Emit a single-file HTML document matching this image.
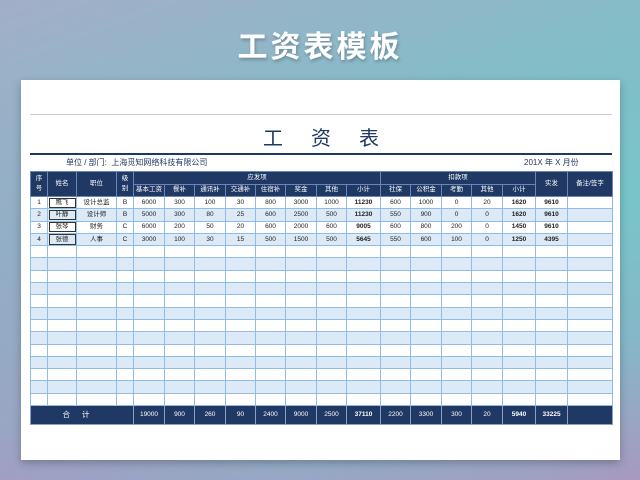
<!DOCTYPE html>
<html><head><meta charset="utf-8"><style>
*{margin:0;padding:0;box-sizing:border-box}
body{width:640px;height:480px;overflow:hidden;position:relative;font-family:"Liberation Sans","Noto Sans CJK SC",sans-serif;
background:linear-gradient(160deg,#a3aec8 0%,#84bcc8 35%,#78c5c9 60%,#86b7c8 80%,#a898c0 100%);}
.bg2{position:absolute;inset:0;background:linear-gradient(to top right,rgba(190,130,190,.55) 0%,rgba(190,130,190,0) 45%);}
h1{position:absolute;top:22px;left:0;width:640px;text-align:center;color:#fff;font-size:30px;font-weight:bold;letter-spacing:3px;text-shadow:1px 2px 3px rgba(0,0,0,.25);font-family:"Noto Sans CJK SC",sans-serif}
.card{position:absolute;left:21px;top:80px;width:599px;height:380px;background:#fff;box-shadow:0 3px 8px rgba(0,0,0,.25)}
.gl{position:absolute;left:30px;top:114px;width:582px;height:1px;background:#ccc}
.tt{position:absolute;left:30px;top:122px;width:582px;text-align:center;font-size:20px;color:#1f3864;letter-spacing:28px;padding-left:28px;font-family:"Noto Sans CJK SC",sans-serif}
.bl{position:absolute;left:30px;top:153px;width:582px;height:2px;background:#1f3864}
.unit{position:absolute;left:66px;top:157px;font-size:8px;color:#1f3864}
.mon{position:absolute;left:524px;top:157px;font-size:8px;color:#1f3864}
table{position:absolute;left:30px;top:171px;width:582px;border-collapse:collapse;table-layout:fixed;font-size:6.5px;text-align:center}
td{border:1px solid #8fbde8;height:12.3px;padding:0;line-height:10px;color:#222;white-space:nowrap;overflow:hidden}
.h td{background:#1f3864;color:#fff;border-color:#6a86b8;height:12.5px}
tr.b td{background:#dce9f6}
.f td{background:#1f3864;color:#fff;border-color:#8aa0c8;height:19px}
.bd{font-weight:bold}
.nm{outline:1px solid #333;outline-offset:-2px}
</style></head><body>
<div class="bg2"></div>
<h1>工资表模板</h1>
<div class="card"></div>
<div class="gl"></div>
<div class="tt">工资表</div>
<div class="bl"></div>
<div class="unit">单位 / 部门:&nbsp;&nbsp;上海觅知网络科技有限公司</div>
<div class="mon">201X 年 X 月份</div>
<table>
<colgroup><col style="width:17px"><col style="width:29px"><col style="width:40px"><col style="width:17px"><col style="width:31px"><col style="width:30px"><col style="width:31px"><col style="width:30px"><col style="width:30px"><col style="width:31px"><col style="width:30px"><col style="width:34px"><col style="width:30px"><col style="width:31px"><col style="width:30px"><col style="width:31px"><col style="width:33px"><col style="width:32px"><col style="width:45px"></colgroup>
<tr class="h"><td rowspan="2">序<br>号</td><td rowspan="2">姓名</td><td rowspan="2">职位</td><td rowspan="2">级<br>别</td><td colspan="8">应发项</td><td colspan="5">扣款项</td><td rowspan="2">实发</td><td rowspan="2">备注/签字</td></tr>
<tr class="h"><td>基本工资</td><td>餐补</td><td>通讯补</td><td>交通补</td><td>住宿补</td><td>奖金</td><td>其他</td><td>小计</td><td>社保</td><td>公积金</td><td>考勤</td><td>其他</td><td>小计</td></tr>
<tr><td>1</td><td class="nm">鹰飞</td><td>设计总监</td><td>B</td><td>6000</td><td>300</td><td>100</td><td>30</td><td>800</td><td>3000</td><td>1000</td><td class="bd">11230</td><td>600</td><td>1000</td><td>0</td><td>20</td><td class="bd">1620</td><td class="bd">9610</td><td></td></tr>
<tr class="b"><td>2</td><td class="nm">叶静</td><td>设计师</td><td>B</td><td>5000</td><td>300</td><td>80</td><td>25</td><td>600</td><td>2500</td><td>500</td><td class="bd">11230</td><td>550</td><td>900</td><td>0</td><td>0</td><td class="bd">1620</td><td class="bd">9610</td><td></td></tr>
<tr><td>3</td><td class="nm">张琴</td><td>财务</td><td>C</td><td>6000</td><td>200</td><td>50</td><td>20</td><td>600</td><td>2000</td><td>600</td><td class="bd">9005</td><td>600</td><td>800</td><td>200</td><td>0</td><td class="bd">1450</td><td class="bd">9610</td><td></td></tr>
<tr class="b"><td>4</td><td class="nm">张德</td><td>人事</td><td>C</td><td>3000</td><td>100</td><td>30</td><td>15</td><td>500</td><td>1500</td><td>500</td><td class="bd">5645</td><td>550</td><td>600</td><td>100</td><td>0</td><td class="bd">1250</td><td class="bd">4395</td><td></td></tr>
<tr><td></td><td></td><td></td><td></td><td></td><td></td><td></td><td></td><td></td><td></td><td></td><td></td><td></td><td></td><td></td><td></td><td></td><td></td><td></td></tr>
<tr class="b"><td></td><td></td><td></td><td></td><td></td><td></td><td></td><td></td><td></td><td></td><td></td><td></td><td></td><td></td><td></td><td></td><td></td><td></td><td></td></tr>
<tr><td></td><td></td><td></td><td></td><td></td><td></td><td></td><td></td><td></td><td></td><td></td><td></td><td></td><td></td><td></td><td></td><td></td><td></td><td></td></tr>
<tr class="b"><td></td><td></td><td></td><td></td><td></td><td></td><td></td><td></td><td></td><td></td><td></td><td></td><td></td><td></td><td></td><td></td><td></td><td></td><td></td></tr>
<tr><td></td><td></td><td></td><td></td><td></td><td></td><td></td><td></td><td></td><td></td><td></td><td></td><td></td><td></td><td></td><td></td><td></td><td></td><td></td></tr>
<tr class="b"><td></td><td></td><td></td><td></td><td></td><td></td><td></td><td></td><td></td><td></td><td></td><td></td><td></td><td></td><td></td><td></td><td></td><td></td><td></td></tr>
<tr><td></td><td></td><td></td><td></td><td></td><td></td><td></td><td></td><td></td><td></td><td></td><td></td><td></td><td></td><td></td><td></td><td></td><td></td><td></td></tr>
<tr class="b"><td></td><td></td><td></td><td></td><td></td><td></td><td></td><td></td><td></td><td></td><td></td><td></td><td></td><td></td><td></td><td></td><td></td><td></td><td></td></tr>
<tr><td></td><td></td><td></td><td></td><td></td><td></td><td></td><td></td><td></td><td></td><td></td><td></td><td></td><td></td><td></td><td></td><td></td><td></td><td></td></tr>
<tr class="b"><td></td><td></td><td></td><td></td><td></td><td></td><td></td><td></td><td></td><td></td><td></td><td></td><td></td><td></td><td></td><td></td><td></td><td></td><td></td></tr>
<tr><td></td><td></td><td></td><td></td><td></td><td></td><td></td><td></td><td></td><td></td><td></td><td></td><td></td><td></td><td></td><td></td><td></td><td></td><td></td></tr>
<tr class="b"><td></td><td></td><td></td><td></td><td></td><td></td><td></td><td></td><td></td><td></td><td></td><td></td><td></td><td></td><td></td><td></td><td></td><td></td><td></td></tr>
<tr><td></td><td></td><td></td><td></td><td></td><td></td><td></td><td></td><td></td><td></td><td></td><td></td><td></td><td></td><td></td><td></td><td></td><td></td><td></td></tr>
<tr class="f"><td colspan="4" style="font-size:7.5px;letter-spacing:12px">合计</td><td>19000</td><td>900</td><td>260</td><td>90</td><td>2400</td><td>9000</td><td>2500</td><td class="bd">37110</td><td>2200</td><td>3300</td><td>300</td><td>20</td><td class="bd">5940</td><td class="bd">33225</td><td></td></tr>
</table>
</body></html>
